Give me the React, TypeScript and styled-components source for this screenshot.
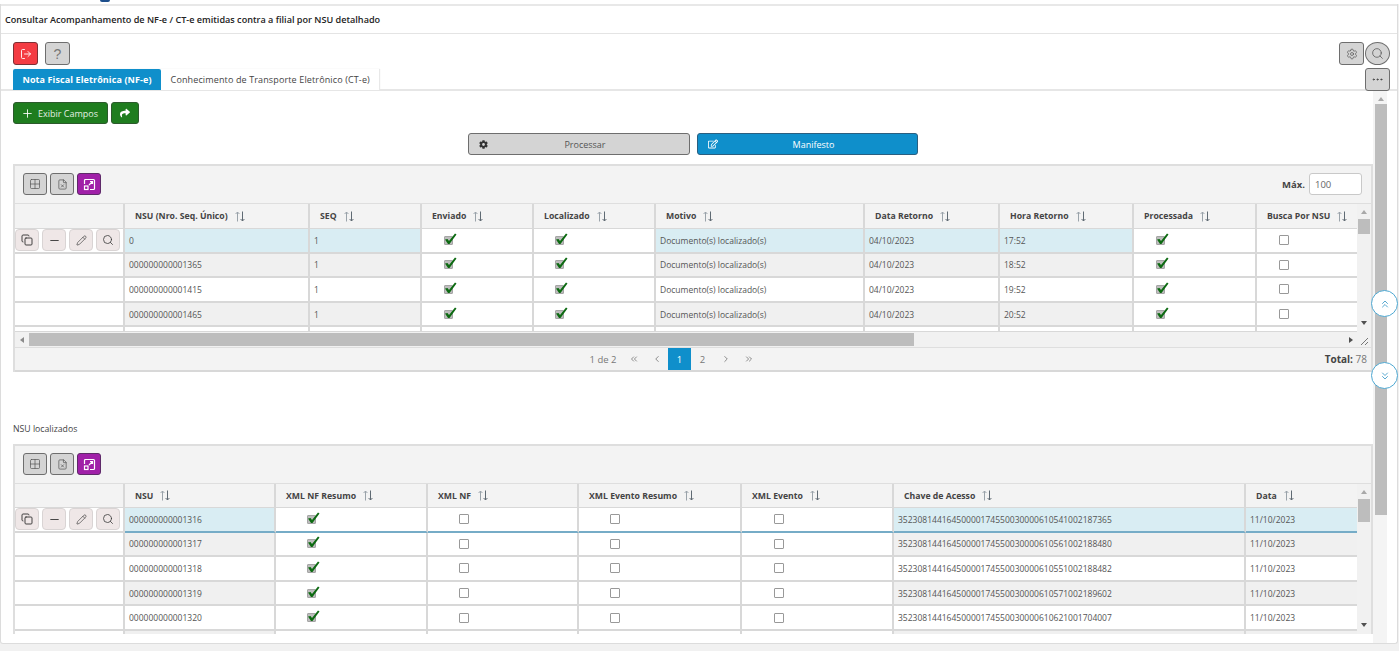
import React from 'react';
import styled, { createGlobalStyle } from 'styled-components';
import {
  ChevronLeft,
  ChevronRight,
  ChevronsDown,
  ChevronsLeft,
  ChevronsRight,
  ChevronsUp,
  Copy,
  Ellipsis,
  FileX,
  Grid2x2,
  LogOut,
  Minus,
  Pencil,
  Plus,
  Search,
  Settings,
} from 'lucide-react';
import { FaCog, FaRegEdit, FaShare } from 'react-icons/fa';

const GlobalStyle = createGlobalStyle`
  html, body {
    margin: 0;
    padding: 0;
    height: 100%;
    overflow: hidden;
    background: #fff;
  }
  body {
    font-family: "Open Sans", "Liberation Sans", sans-serif;
    font-size: 9px;
    color: #555;
  }
  * { box-sizing: border-box; }
`;

const Page = styled.div`
  position: relative;
  width: 1399px;
  height: 651px;
  background: #f1f1f1;
  display: flex;
  flex-direction: column;
  overflow: hidden;
`;

const LogoStrip = styled.div`
  height: 4px;
  background: #fff;
  flex: none;
  padding-left: 100px;
`;

const LogoBit = styled.div`
  width: 10px;
  height: 2px;
  border-radius: 0 0 5px 5px;
  background: #1d4f8c;
`;

const Card = styled.div`
  width: 1398px;
  height: 640px;
  flex: none;
  background: #fff;
  border: 1px solid #dcdcdc;
  border-top: 0;
  border-radius: 0 0 3px 3px;
  display: flex;
  flex-direction: column;
  overflow: hidden;
`;

const TitleBar = styled.div`
  flex: none;
  height: 30px;
  padding: 0 4px;
  display: flex;
  align-items: center;
  border-top: 2px solid #e8e8e8;
  border-bottom: 1px solid #e4e4e4;
  font-size: 9.1px;
  font-weight: 600;
  color: #222;
`;

const TopActions = styled.div`
  flex: none;
  height: 35px;
  padding: 8px 7px 0 12px;
  display: flex;
  justify-content: space-between;
`;

const Group = styled.div`
  display: flex;
  gap: 7px;
`;

const TightGroup = styled.div`
  display: flex;
  gap: 1px;
`;

const IconButton = styled.button<{ $tone?: 'red' | 'grey' | 'purple'; $round?: boolean }>`
  width: 25px;
  height: 23px;
  padding: 0;
  display: flex;
  align-items: center;
  justify-content: center;
  border-radius: ${(p) => (p.$round ? '50%' : '3px')};
  border: 1px solid ${(p) => (p.$tone === 'red' ? '#7d3035' : p.$tone === 'purple' ? '#5e2a69' : '#6e6e6e')};
  background: ${(p) => (p.$tone === 'red' ? '#f43c43' : p.$tone === 'purple' ? '#a020a8' : '#d4d4d4')};
  color: ${(p) => (p.$tone === 'red' || p.$tone === 'purple' ? '#fff' : '#555')};
`;

const ToolButton = styled(IconButton)`
  width: 24px;
  height: 22px;
`;

const ToolGroup = styled.div`
  display: flex;
  gap: 3px;
`;

const Glyph = styled.span`
  font-size: 14px;
  line-height: 1;
  color: #777;
`;

const TabRow = styled.div`
  flex: none;
  height: 22px;
  padding-left: 12px;
  display: flex;
  justify-content: space-between;
  border-bottom: 2px solid #e6e6e6;
  position: relative;
`;

const Tabs = styled.div`
  display: flex;
  height: 21px;
  box-shadow: 1px 0 1px #e8e8e8;
`;

const Tab = styled.div<{ $active?: boolean }>`
  display: flex;
  align-items: center;
  padding: 0 9.5px;
  font-size: 9px;
  border-radius: 2px 2px 0 0;
  letter-spacing: ${(p) => (p.$active ? '0.1px' : '0.13px')};
  font-weight: ${(p) => (p.$active ? 700 : 400)};
  background: ${(p) => (p.$active ? '#0f8fcb' : '#fff')};
  color: ${(p) => (p.$active ? '#fff' : '#444')};
`;

const MoreSlot = styled.div`
  position: absolute;
  right: 7px;
  top: -1px;
`;

const Body = styled.div`
  flex: 1;
  min-height: 0;
  display: flex;
  overflow: hidden;
`;

const Content = styled.div`
  flex: 1;
  min-width: 0;
  padding: 11px 0 0 12px;
  overflow: hidden;
`;

const GreenRow = styled.div`
  display: flex;
  gap: 3px;
`;

const GreenButton = styled.button<{ $wide?: boolean }>`
  width: ${(p) => (p.$wide ? '95px' : '28px')};
  height: 22px;
  padding: ${(p) => (p.$wide ? '0 0 0 7px' : '0')};
  display: flex;
  align-items: center;
  justify-content: ${(p) => (p.$wide ? 'flex-start' : 'center')};
  gap: 4px;
  border: 1px solid #2c5a2c;
  border-radius: 3px;
  background: #1f7d1f;
  color: #e3efe3;
  font: 400 9px "Open Sans", sans-serif;
  white-space: nowrap;
`;

const ProcessRow = styled.div`
  margin-top: 9px;
  display: flex;
  justify-content: center;
  gap: 7px;
  padding-left: 12px;
  padding-right: 12px;
`;

const WideButton = styled.button<{ $primary?: boolean }>`
  width: ${(p) => (p.$primary ? '221px' : '222px')};
  height: 22px;
  padding: 0 10px;
  display: grid;
  grid-template-columns: 12px 1fr;
  align-items: center;
  border-radius: 3px;
  border: 1px solid ${(p) => (p.$primary ? '#2a5f80' : '#6e6e6e')};
  background: ${(p) => (p.$primary ? '#0f8fcb' : '#d4d4d4')};
  color: ${(p) => (p.$primary ? '#fff' : '#555')};
  font: 400 9px "Open Sans", sans-serif;
`;

const Panel = styled.div<{ $gapTop: number }>`
  margin-top: ${(p) => p.$gapTop}px;
  border: 2px solid #dedede;
  border-bottom: 0;
  background: #f3f3f3;
  width: 1360px;
`;

const PanelTools = styled.div`
  height: 38px;
  padding: 7px 9px 0 8px;
  display: flex;
  justify-content: space-between;
  align-items: flex-start;
  border-bottom: 1px solid #dedede;
`;

const MaxBox = styled.div`
  display: flex;
  align-items: center;
  gap: 4px;
  font-weight: 700;
  font-size: 9.5px;
  color: #444;
`;

const MaxInput = styled.div`
  width: 53px;
  height: 22px;
  background: #fff;
  border: 1px solid #c9c9c9;
  border-radius: 3px;
  padding-left: 5px;
  display: flex;
  align-items: center;
  font-weight: 400;
  font-size: 9.5px;
  color: #666;
`;

const GridArea = styled.div<{ $height: number }>`
  height: ${(p) => p.$height}px;
  display: flex;
  background: #fff;
  overflow: hidden;
`;

const GridInner = styled.div`
  flex: 1;
  min-width: 0;
  overflow: hidden;
`;

const GridRow = styled.div<{ $columns: string; $height: number }>`
  display: grid;
  grid-template-columns: ${(p) => p.$columns};
  height: ${(p) => p.$height}px;
`;

const HeadCell = styled.div`
  display: flex;
  align-items: center;
  gap: 7px;
  padding-left: 10px;
  background: #f3f3f3;
  border-right: 2px solid #d8d8d8;
  border-bottom: 1px solid #d8d8d8;
  font-size: 8.7px;
  font-weight: 700;
  color: #444;
  white-space: nowrap;
  overflow: hidden;
`;

const Cell = styled.div<{ $bg: string; $accent?: boolean; $inset?: number }>`
  display: flex;
  align-items: center;
  padding-left: ${(p) => p.$inset ?? 4}px;
  background: ${(p) => p.$bg};
  border-right: 2px solid #d8d8d8;
  border-bottom: 2px solid ${(p) => (p.$accent ? '#76acc7' : '#d8d8d8')};
  font-size: 8.5px;
  color: #555;
  white-space: nowrap;
  overflow: hidden;
`;

const ActionCell = styled.div`
  display: flex;
  gap: 3px;
  align-items: center;
  background: #fff;
  border-right: 2px solid #d8d8d8;
  border-bottom: 2px solid #d8d8d8;
`;

const RowAction = styled.button`
  width: 24px;
  height: 22px;
  padding: 0;
  display: flex;
  align-items: center;
  justify-content: center;
  background: #efe7e7;
  border: 1px solid #d9d4d4;
  border-radius: 4px;
  color: #3a3a3a;
`;

const SortIcon = styled.svg`
  flex: none;
`;

const CheckBox = styled.span`
  position: relative;
  display: inline-block;
  width: 10px;
  height: 10px;
  border: 1px solid #999;
  border-radius: 1px;
  background: #fff;
`;

const CheckedBox = styled(CheckBox)`
  width: 9px;
  height: 9px;
  background: #bdbdbd;
  border-color: #a5a5a5;
`;

const CheckMark = styled.svg`
  position: absolute;
  left: -1px;
  top: -4px;
  overflow: visible;
`;

const VScroll = styled.div`
  flex: none;
  width: 14px;
  background: #f1f1f1;
  position: relative;
  display: flex;
  flex-direction: column;
  align-items: center;
`;

const ArrowUpGlyph = styled.div`
  width: 0;
  height: 0;
  margin: 6px 0 5px;
  border-left: 3px solid transparent;
  border-right: 3px solid transparent;
  border-bottom: 4px solid #a8a8a8;
`;

const ArrowDownGlyph = styled.div`
  position: absolute;
  bottom: 7px;
  width: 0;
  height: 0;
  border-left: 3px solid transparent;
  border-right: 3px solid transparent;
  border-top: 4px solid #505050;
`;

const VThumb = styled.div<{ $height: number }>`
  width: 12px;
  height: ${(p) => p.$height}px;
  background: #bdbdbd;
`;

const HScroll = styled.div`
  height: 15px;
  display: flex;
  align-items: center;
  background: #f1f1f1;
  position: relative;
`;

const HThumb = styled.div`
  margin-left: 14px;
  width: 885px;
  height: 13px;
  background: #bdbdbd;
`;

const ArrowLeftGlyph = styled.div`
  position: absolute;
  left: 5px;
  width: 0;
  height: 0;
  border-top: 3px solid transparent;
  border-bottom: 3px solid transparent;
  border-right: 4px solid #8a8a8a;
`;

const ArrowRightGlyph = styled.div`
  position: absolute;
  right: 18px;
  width: 0;
  height: 0;
  border-top: 3px solid transparent;
  border-bottom: 3px solid transparent;
  border-left: 4px solid #505050;
`;

const ResizeMark = styled.svg`
  position: absolute;
  right: 2px;
  bottom: 1px;
`;

const Pager = styled.div`
  height: 25px;
  position: relative;
  display: flex;
  align-items: center;
  justify-content: center;
  border-top: 1px solid #dedede;
  border-bottom: 2px solid #d8d8d8;
  background: #f3f3f3;
  color: #888;
  font-size: 9.5px;
  padding-right: 38px;
`;

const PagerItems = styled.div`
  display: flex;
  align-items: center;
  height: 100%;
`;

const PagerSlot = styled.div<{ $active?: boolean }>`
  width: 23px;
  height: 100%;
  display: flex;
  align-items: center;
  justify-content: center;
  background: ${(p) => (p.$active ? '#0f8fcb' : 'transparent')};
  color: ${(p) => (p.$active ? '#fff' : '#777')};
`;

const PagerCount = styled(PagerSlot)`
  width: 30px;
  margin-right: 4px;
  white-space: nowrap;
`;

const TotalLabel = styled.div`
  position: absolute;
  right: 4px;
  font-size: 10px;
  color: #777;

  b {
    color: #444;
  }
`;

const SectionTitle = styled.div`
  margin-top: 51px;
  height: 13px;
  font-size: 8.7px;
  color: #444;
  line-height: 13px;
`;

const MainScroll = styled.div`
  flex: none;
  width: 14px;
  margin-right: 10px;
  background: #f4f4f4;
  display: flex;
  flex-direction: column;
  align-items: flex-end;
`;

const MainArrow = styled(ArrowUpGlyph)`
  margin: 6px 3px 3px 0;
`;

const MainThumb = styled.div`
  width: 12px;
  flex: 1;
  margin-bottom: 128px;
  background: #bdbdbd;
`;

const FloatCircle = styled.button<{ $top: number }>`
  position: absolute;
  right: 1px;
  top: ${(p) => p.$top}px;
  width: 27px;
  height: 27px;
  padding: 0;
  display: flex;
  align-items: center;
  justify-content: center;
  border-radius: 50%;
  background: #fff;
  border: 1px solid #4ea8d2;
  color: #2f93c4;
`;

const Sort = () => (
  <SortIcon width="10" height="11" viewBox="0 0 10 11" fill="none" strokeWidth="1">
    <path d="M2.5 10.5V1 M0.6 3 L2.5 1 L4.4 3" stroke="#9aa3aa" />
    <path d="M7.5 0.5V10 M5.6 8 L7.5 10 L9.4 8" stroke="#5f6a73" />
  </SortIcon>
);

const Checked = () => (
  <CheckedBox>
    <CheckMark width="14" height="12" viewBox="0 0 14 12">
      <path d="M1 6.5 L3.5 6 L5 8 L11 0.5 L12.5 1.5 L5.5 11 L4 11 Z" fill="#0d6a12" />
    </CheckMark>
  </CheckedBox>
);

const ExpandIcon = () => (
  <svg width="13" height="13" viewBox="0 0 13 13" fill="none" stroke="#fff" strokeWidth="1.2">
    <path d="M1.5 6V2.5a1 1 0 0 1 1-1h8a1 1 0 0 1 1 1v8a1 1 0 0 1-1 1H7" />
    <rect x="1.5" y="8" width="3.5" height="3.5" />
    <path d="M6 7 L9.5 3.5 M7 3.5 H9.5 V6" />
  </svg>
);

const TableTools = () => (
  <ToolGroup>
    <ToolButton>
      <Grid2x2 size={12} strokeWidth={1.4} />
    </ToolButton>
    <ToolButton>
      <FileX size={11} strokeWidth={1.6} />
    </ToolButton>
    <ToolButton $tone="purple">
      <ExpandIcon />
    </ToolButton>
  </ToolGroup>
);

const RowActions = () => (
  <>
    <RowAction>
      <Copy size={12} strokeWidth={1.9} />
    </RowAction>
    <RowAction>
      <Minus size={13} strokeWidth={1.7} />
    </RowAction>
    <RowAction>
      <Pencil size={11} strokeWidth={1.4} />
    </RowAction>
    <RowAction>
      <Search size={12} strokeWidth={1.6} />
    </RowAction>
  </>
);

const rowBg = (row: number) => {
  if (row === 0) return '#d9edf3';
  return row % 2 === 1 ? '#f0f0f0' : '#fff';
};

const topColumns = '110px 185px 112px 112px 122px 209px 135px 134px 123px 110px';
const topHeaders = ['NSU (Nro. Seq. Único)', 'SEQ', 'Enviado', 'Localizado', 'Motivo', 'Data Retorno', 'Hora Retorno', 'Processada', 'Busca Por NSU'];
const topRows = [
  ['0', '04/10/2023', '17:52'],
  ['000000000001365', '04/10/2023', '18:52'],
  ['000000000001415', '04/10/2023', '19:52'],
  ['000000000001465', '04/10/2023', '20:52'],
  ['', '', ''],
];

const bottomColumns = '110px 151px 152px 151px 163px 152px 352px 120px';
const bottomHeaders = ['NSU', 'XML NF Resumo', 'XML NF', 'XML Evento Resumo', 'XML Evento', 'Chave de Acesso', 'Data'];
const bottomRows = [
  ['000000000001316', '35230814416450000174550030000610541002187365'],
  ['000000000001317', '35230814416450000174550030000610561002188480'],
  ['000000000001318', '35230814416450000174550030000610551002188482'],
  ['000000000001319', '35230814416450000174550030000610571002189602'],
  ['000000000001320', '35230814416450000174550030000610621001704007'],
  ['', ''],
];

export default function App() {
  return (
    <Page>
      <GlobalStyle />
      <LogoStrip>
        <LogoBit />
      </LogoStrip>
      <Card>
        <TitleBar>Consultar Acompanhamento de NF-e / CT-e emitidas contra a filial por NSU detalhado</TitleBar>
        <TopActions>
          <Group>
            <IconButton $tone="red">
              <LogOut size={12} strokeWidth={1.8} />
            </IconButton>
            <IconButton>
              <Glyph>?</Glyph>
            </IconButton>
          </Group>
          <TightGroup>
            <IconButton>
              <Settings size={12} strokeWidth={1.4} />
            </IconButton>
            <IconButton $round>
              <Search size={13} strokeWidth={1.4} />
            </IconButton>
          </TightGroup>
        </TopActions>
        <TabRow>
          <Tabs>
            <Tab $active>Nota Fiscal Eletrônica (NF-e)</Tab>
            <Tab>Conhecimento de Transporte Eletrônico (CT-e)</Tab>
          </Tabs>
          <MoreSlot>
            <IconButton>
              <Ellipsis size={13} strokeWidth={1.8} color="#444" />
            </IconButton>
          </MoreSlot>
        </TabRow>
        <Body>
          <Content>
            <GreenRow>
              <GreenButton $wide>
                <Plus size={13} strokeWidth={1.6} color="#fff" />
                Exibir Campos
              </GreenButton>
              <GreenButton>
                <FaShare size={10} color="#fff" />
              </GreenButton>
            </GreenRow>
            <ProcessRow>
              <WideButton>
                <FaCog size={9} color="#333" />
                Processar
              </WideButton>
              <WideButton $primary>
                <FaRegEdit size={10} color="#fff" />
                Manifesto
              </WideButton>
            </ProcessRow>

            <Panel $gapTop={9}>
              <PanelTools>
                <TableTools />
                <MaxBox>
                  Máx.
                  <MaxInput>100</MaxInput>
                </MaxBox>
              </PanelTools>
              <GridArea $height={128}>
                <GridInner>
                  <GridRow $columns={topColumns} $height={25}>
                    <HeadCell />
                    {topHeaders.map((h) => (
                      <HeadCell key={h}>
                        {h} <Sort />
                      </HeadCell>
                    ))}
                  </GridRow>
                  {topRows.map((r, i) => (
                    <GridRow key={i} $columns={topColumns} $height={i === 4 ? 6 : 24.6}>
                      {i === 0 ? (
                        <ActionCell>
                          <RowActions />
                        </ActionCell>
                      ) : (
                        <ActionCell />
                      )}
                      <Cell $bg={rowBg(i)}>{r[0]}</Cell>
                      <Cell $bg={rowBg(i)}>{i < 4 ? '1' : ''}</Cell>
                      <Cell $bg="#fff" $inset={22}>{i < 4 && <Checked />}</Cell>
                      <Cell $bg="#fff" $inset={21}>{i < 4 && <Checked />}</Cell>
                      <Cell $bg={rowBg(i)}>{i < 4 ? 'Documento(s) localizado(s)' : ''}</Cell>
                      <Cell $bg={rowBg(i)}>{r[1]}</Cell>
                      <Cell $bg={rowBg(i)}>{r[2]}</Cell>
                      <Cell $bg="#fff" $inset={22}>{i < 4 && <Checked />}</Cell>
                      <Cell $bg="#fff" $inset={22}>{i < 4 && <CheckBox />}</Cell>
                    </GridRow>
                  ))}
                </GridInner>
                <VScroll>
                  <ArrowUpGlyph />
                  <VThumb $height={15} />
                  <ArrowDownGlyph />
                </VScroll>
              </GridArea>
              <HScroll>
                <ArrowLeftGlyph />
                <HThumb />
                <ArrowRightGlyph />
                <ResizeMark width="10" height="10" viewBox="0 0 10 10">
                  <path d="M2 9 L9 2 M6 9 L9 6" stroke="#777" strokeWidth="1" />
                </ResizeMark>
              </HScroll>
              <Pager>
                <PagerItems>
                  <PagerCount>1 de 2</PagerCount>
                  <PagerSlot>
                    <ChevronsLeft size={10} />
                  </PagerSlot>
                  <PagerSlot>
                    <ChevronLeft size={10} />
                  </PagerSlot>
                  <PagerSlot $active>1</PagerSlot>
                  <PagerSlot>2</PagerSlot>
                  <PagerSlot>
                    <ChevronRight size={10} />
                  </PagerSlot>
                  <PagerSlot>
                    <ChevronsRight size={10} />
                  </PagerSlot>
                </PagerItems>
                <TotalLabel>
                  <b>Total:</b> 78
                </TotalLabel>
              </Pager>
            </Panel>

            <SectionTitle>NSU localizados</SectionTitle>
            <Panel $gapTop={8}>
              <PanelTools>
                <TableTools />
              </PanelTools>
              <GridArea $height={150}>
                <GridInner>
                  <GridRow $columns={bottomColumns} $height={24}>
                    <HeadCell />
                    {bottomHeaders.map((h) => (
                      <HeadCell key={h}>
                        {h} <Sort />
                      </HeadCell>
                    ))}
                  </GridRow>
                  {bottomRows.map((r, i) => (
                    <GridRow key={i} $columns={bottomColumns} $height={i === 5 ? 5 : 24.6}>
                      {i === 0 ? (
                        <ActionCell>
                          <RowActions />
                        </ActionCell>
                      ) : (
                        <ActionCell />
                      )}
                      <Cell $bg={rowBg(i)} $accent={i === 0}>{r[0]}</Cell>
                      <Cell $bg="#fff" $accent={i === 0} $inset={31}>{i < 5 && <Checked />}</Cell>
                      <Cell $bg="#fff" $accent={i === 0} $inset={31}>{i < 5 && <CheckBox />}</Cell>
                      <Cell $bg="#fff" $accent={i === 0} $inset={31}>{i < 5 && <CheckBox />}</Cell>
                      <Cell $bg="#fff" $accent={i === 0} $inset={32}>{i < 5 && <CheckBox />}</Cell>
                      <Cell $bg={rowBg(i)} $accent={i === 0}>{r[1]}</Cell>
                      <Cell $bg={rowBg(i)} $accent={i === 0}>{i < 5 ? '11/10/2023' : ''}</Cell>
                    </GridRow>
                  ))}
                </GridInner>
                <VScroll>
                  <ArrowUpGlyph />
                  <VThumb $height={23} />
                  <ArrowDownGlyph />
                </VScroll>
              </GridArea>
            </Panel>
          </Content>
          <MainScroll>
            <MainArrow />
            <MainThumb />
          </MainScroll>
        </Body>
      </Card>
      <FloatCircle $top={290}>
        <ChevronsUp size={12} strokeWidth={1.6} />
      </FloatCircle>
      <FloatCircle $top={362}>
        <ChevronsDown size={12} strokeWidth={1.6} />
      </FloatCircle>
    </Page>
  );
}
